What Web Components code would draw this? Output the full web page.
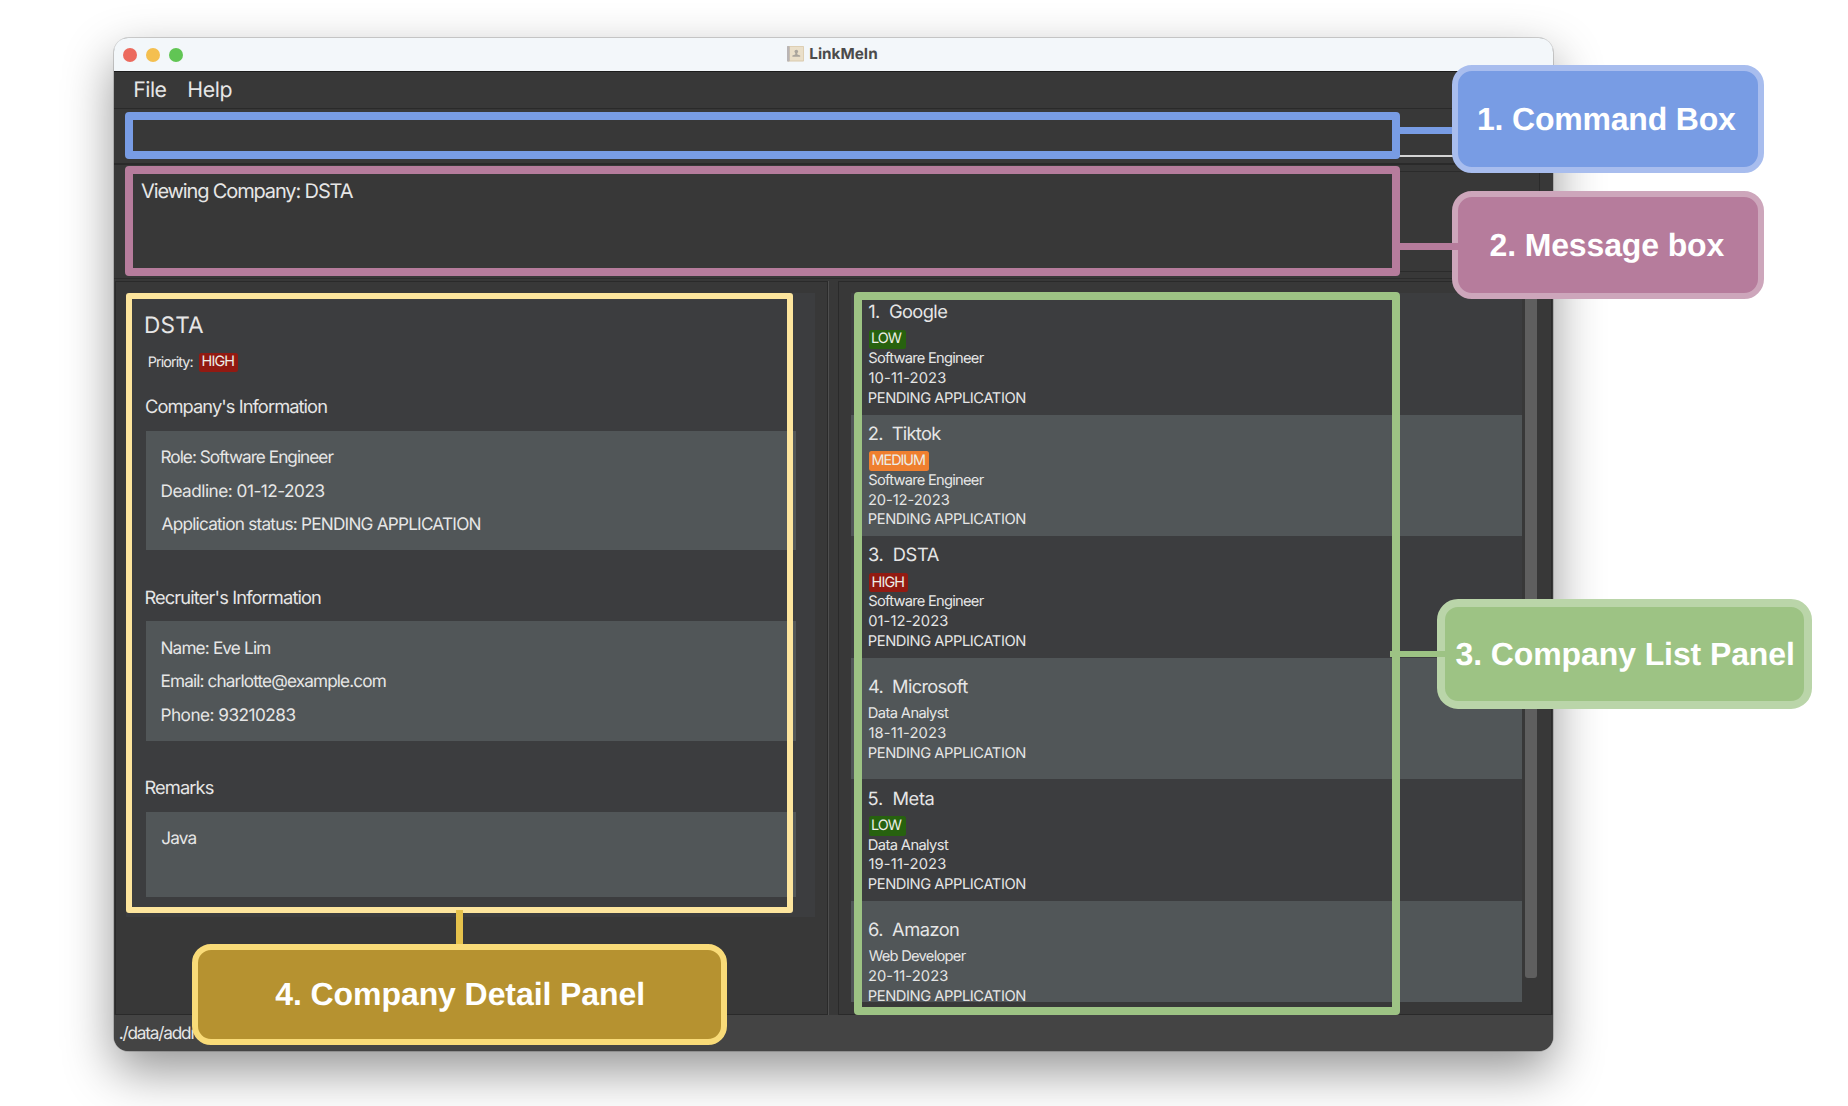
<!DOCTYPE html>
<html lang="en">
<head>
<meta charset="utf-8">
<title>LinkMeIn</title>
<style>
html,body{margin:0;background:#fff}
body{width:1848px;height:1106px;overflow:hidden;position:relative;font-family:Inter,"Liberation Sans",sans-serif;color:#e6e6e6;text-rendering:geometricPrecision}
</style>
</head>
<body>
<app-window></app-window>
<call-out style="--x:1399px;--y:127px;--w:54px;--h:6.5px;--c:#789ce4" kind="line"></call-out>
<call-out style="--x:125px;--y:112px;--w:1274.5px;--h:47px;--b:8.5px;--r:4px;--c:#789ce4" kind="frame"></call-out>
<call-out style="--x:125px;--y:166px;--w:1274.5px;--h:110px;--b:8.5px;--r:4px;--c:#b67c9c" kind="frame"></call-out>
<call-out style="--x:126px;--y:293px;--w:667px;--h:620px;--b:6.5px;--r:3px;--c:#fde59d" kind="frame"></call-out>
<call-out style="--x:853.5px;--y:292px;--w:546px;--h:723px;--b:8.5px;--r:4px;--c:#9dc384" kind="frame"></call-out>
<call-out style="--x:456px;--y:910px;--w:6.5px;--h:36px;--c:#e5c14b" kind="line"></call-out>
<call-out style="--x:1451.5px;--y:65.4px;--w:312px;--h:108px;--b:6.3px;--r:20px;--c:#a8bdee;--f:#789ce4" kind="label"><ink-text w="257" s="32" l="42">1. Command Box</ink-text></call-out>
<call-out style="--x:1451.5px;--y:191.4px;--w:312px;--h:108px;--b:6.3px;--r:20px;--c:#cda6bb;--f:#b67c9c" kind="label"><ink-text w="234" s="32" l="42">2. Message box</ink-text></call-out>
<call-out style="--x:1437px;--y:599px;--w:375px;--h:109.5px;--b:8.4px;--r:21px;--c:#bad5a9;--f:#9dc384" kind="label"><ink-text w="337" s="32" l="42">3. Company List Panel</ink-text></call-out>
<call-out style="--x:191.5px;--y:943.6px;--w:535.5px;--h:101px;--b:6.3px;--r:19px;--c:#f9db78;--f:#b69230" kind="label"><ink-text w="368" s="32" l="42">4. Company Detail Panel</ink-text></call-out>
<call-out style="--x:1399px;--y:243px;--w:59px;--h:6.5px;--c:#b67c9c" kind="line"></call-out>
<call-out style="--x:1390px;--y:651px;--w:56px;--h:6px;--c:#9dc384" kind="line"></call-out>

<script>
const define = (name, markup, setup) => {
  const tpl = document.createElement('template');
  tpl.innerHTML = markup;
  customElements.define(name, class extends HTMLElement {
    connectedCallback() {
      if (this.shadowRoot) return;
      this.attachShadow({mode: 'open'}).append(tpl.content.cloneNode(true));
      if (setup) setup(this, this.shadowRoot);
    }
  });
};

/* Single line of text whose visible ink spans w pixels:
   s = font size, l = line height. Side bearings are measured at ten times
   the size, the advance width on the laid-out text itself. */
const ctx = document.createElement('canvas').getContext('2d');
const fitText = el => {
  const s = +el.getAttribute('s'), w = +el.getAttribute('w');
  const cs = getComputedStyle(el), t = el.textContent;
  ctx.font = `${cs.fontWeight} ${s * 10}px ${cs.fontFamily}`;
  const m = ctx.measureText(t);
  const left = -m.actualBoundingBoxLeft / 10;
  const right = (m.width - m.actualBoundingBoxRight) / 10;
  const range = document.createRange();
  range.selectNodeContents(el);
  const advance = () => range.getBoundingClientRect().width;
  let gap = 0;
  for (let i = 0; i < 3; i++) {
    const inked = advance() - left - right - gap;
    gap += (w - inked) / (t.length - 1);
    el.style.letterSpacing = gap.toFixed(3) + 'px';
  }
  el.style.marginLeft = (-left).toFixed(2) + 'px';
  el.style.width = (w + left).toFixed(2) + 'px';
};
define('ink-text', `<style>
:host{display:block;white-space:pre;flex:none}
</style><slot></slot>`, el => {
  el.style.fontSize = el.getAttribute('s') + 'px';
  el.style.lineHeight = el.getAttribute('l') + 'px';
});

define('call-out', `<style>
:host{position:absolute;left:var(--x);top:var(--y);width:var(--w);height:var(--h);box-sizing:border-box}
:host([kind=line]){background:var(--c)}
:host([kind=frame]){border:var(--b) solid var(--c);border-radius:var(--r)}
:host([kind=label]){border:var(--b) solid var(--c);border-radius:var(--r);background:var(--f);display:flex;align-items:center;justify-content:center;color:#fff;font-family:"Liberation Sans",Arial,sans-serif;font-weight:700}
</style><slot></slot>`);

define('title-bar', `<style>
:host{display:flex;flex:none;background:#f3f7fa;border-bottom:1px solid #1c1c1c;box-sizing:border-box;height:34px;align-items:center;justify-content:center;position:relative;color:#4b4b4b;font-weight:700}
.lights{position:absolute;left:9px;top:9.7px;display:flex;gap:9.2px}
i{width:14px;height:14px;border-radius:50%}
svg{margin-right:6px;margin-top:-1px}
.mid{display:flex;align-items:center;margin-left:-3px;margin-top:-1px}
</style>
<div class="lights"><i style="background:#ec6a5e"></i><i style="background:#f4bf4f"></i><i style="background:#61c554"></i></div>
<div class="mid"><svg width="17" height="16" viewBox="0 0 17 16"><rect width="17" height="15.5" rx="1" fill="#d9c9aa"/><rect x="3" y=".7" width="13.3" height="13.8" fill="#eadfc9"/><rect width="2.6" height="15.5" rx=".8" fill="#b9b5b5"/><circle cx="9.3" cy="5.6" r="1.8" fill="#aaa59d"/><path d="M8.5 6h1.6l.3 2.4 2.8 1v1.4H5.4V9.4l2.8-1z" fill="#aaa59d"/></svg>
<ink-text w="66.5" s="15.3" l="20">LinkMeIn</ink-text></div>`);

define('menu-bar', `<style>
:host{display:flex;height:37px;flex:none;box-sizing:border-box;border-bottom:1px solid #2a2a2a;padding:4px 0 0 21px;gap:23px}
</style><ink-text w="31" s="21.3" l="29">File</ink-text><ink-text w="42.5" s="21.3" l="29">Help</ink-text>`);

define('command-box', `<style>
:host{display:flex;height:56px;flex:none;box-sizing:border-box;border-bottom:2px solid #2a2a2a;padding:4px 14px 6px 12px}
div{flex:1;border-bottom:2px solid #d4d4d4}
</style><div></div>`);

define('result-display', `<style>
:host{display:block;height:114px;flex:none;box-sizing:border-box;padding:6px 13px 6px 11px;border-bottom:1px solid #2c2c2c}
div{height:101px;box-sizing:border-box;border:1px solid #2b2b2b;padding:5px 0 0 15.5px}
</style><div><ink-text w="211.5" s="20" l="29">Viewing Company: DSTA</ink-text></div>`);

define('priority-tag', `<style>
:host{display:flex;height:19.6px;flex:none;align-items:center;justify-content:center;box-sizing:border-box;border-radius:2.5px;color:#eceee8}
:host([level=LOW]){background:#27620f;width:37px}
:host([level=MEDIUM]){background:#ef7f2f;width:60.5px}
:host([level=HIGH]){background:#921a12;width:39.5px}
</style>`, (el, root) => {
  const lv = el.getAttribute('level');
  const t = document.createElement('ink-text');
  t.textContent = lv;
  t.setAttribute('w', {LOW: 29.5, MEDIUM: 52, HIGH: 31}[lv]);
  t.setAttribute('s', 14.4); t.setAttribute('l', 20);
  root.append(t);
});

define('info-section', `<style>
:host{display:block;margin-bottom:35.4px}
.box{margin-top:11.7px;height:var(--bh,119.5px);width:650px;background:#515658;box-sizing:border-box;padding:10.4px 16px 0}
</style><slot name="head"></slot><div class="box"><slot></slot></div>`);

define('company-detail', `<style>
:host{display:block;width:689px;height:624px;box-sizing:border-box;background:#3c3d3f;padding:17.5px 0 0 20px}
.p{display:flex;margin:12px 0 22.7px;padding-left:3px;gap:6px}
</style>
<ink-text w="57" s="22.6" l="30">DSTA</ink-text>
<div class="p"><ink-text w="43.5" s="14.4" l="20">Priority:</ink-text><priority-tag level="HIGH"></priority-tag></div>
<info-section><ink-text slot="head" w="180.5" s="18.3" l="24">Company's Information</ink-text>
<ink-text w="171.5" s="17.2" l="33.6">Role: Software Engineer</ink-text>
<ink-text w="162" s="17.2" l="33.6">Deadline: 01-12-2023</ink-text>
<ink-text w="318" s="17.2" l="33.6">Application status: PENDING APPLICATION</ink-text></info-section>
<info-section><ink-text slot="head" w="174.5" s="18.3" l="24">Recruiter's Information</ink-text>
<ink-text w="108" s="17.2" l="33.6">Name: Eve Lim</ink-text>
<ink-text w="223.5" s="17.2" l="33.6">Email: charlotte@example.com</ink-text>
<ink-text w="133" s="17.2" l="33.6">Phone: 93210283</ink-text></info-section>
<info-section style="--bh:85px"><ink-text slot="head" w="67.5" s="18.3" l="24">Remarks</ink-text>
<ink-text w="34" s="17.2" l="33.6">Java</ink-text></info-section>`);

define('company-row', `<style>
:host{display:flex;flex-direction:column;align-items:flex-start;justify-content:center;height:121.6px;flex:none;box-sizing:border-box;padding:1.1px 0 0 18px;background:#3c3d3f}
:host(:nth-child(even)){background:#515658}
:host(:last-child){height:101px;justify-content:flex-start;padding-top:17px}
priority-tag{margin-left:-.5px}
.t{margin-bottom:5.4px}
</style>`, (el, root) => {
  const [name, nw, level, role, rw, date, dw] = el.row;
  const line = (text, w, s, l) => {
    const t = document.createElement('ink-text');
    t.textContent = text;
    t.setAttribute('w', w); t.setAttribute('s', s); t.setAttribute('l', l);
    root.append(t);
    return t;
  };
  line(name, nw, 18.3, 24).className = 't';
  if (level) {
    const p = document.createElement('priority-tag');
    p.setAttribute('level', level);
    root.append(p);
  }
  line(role, rw, 14.7, 19.7);
  line(date, dw, 14.7, 19.7);
  line('PENDING APPLICATION', 156, 14.7, 19.7);
});

define('company-list', `<style>
:host{display:flex;gap:3px;height:709.5px}
.rows{width:671px;display:flex;flex-direction:column}
.bar{width:12px;height:685px;border-radius:3px;background:#5f5f5f}
</style><div class="rows"></div><div class="bar"></div>`, (el, root) => {
  const rows = [
    ['1.  Google', 78, 'LOW', 'Software Engineer', 115, '10-11-2023', 76.5],
    ['2.  Tiktok', 72, 'MEDIUM', 'Software Engineer', 115, '20-12-2023', 80],
    ['3.  DSTA', 70, 'HIGH', 'Software Engineer', 115, '01-12-2023', 78.5],
    ['4.  Microsoft', 99, '', 'Data Analyst', 79.5, '18-11-2023', 76.5],
    ['5.  Meta', 64.5, 'LOW', 'Data Analyst', 79.5, '19-11-2023', 76.5],
    ['6.  Amazon', 89.5, '', 'Web Developer', 97, '20-11-2023', 78.5]
  ];
  for (const r of rows) {
    const n = document.createElement('company-row');
    n.row = r;
    root.querySelector('.rows').append(n);
  }
});

define('status-bar', `<style>
:host{display:block;height:36px;flex:none;background:#444;box-sizing:border-box;padding:2.5px 0 0 6px}
</style><ink-text w="76.5" s="17.2" l="31">./data/addr</ink-text>`);

define('app-window', `<style>
:host{display:flex;flex-direction:column;width:1439px;height:1013px;position:absolute;left:114px;top:38px;border-radius:15px;background:#383838;box-shadow:0 0 0 1px rgba(0,0,0,.16),0 20px 50px rgba(0,0,0,.42)}
.clip{display:flex;flex-direction:column;height:100%;border-radius:14px;overflow:hidden}
.split{flex:1;display:flex;padding:2px 1px 0}
.pane{box-sizing:border-box;border:1px solid #2a2a2a}
.l{width:713px;padding:11px 0 0 10px}
.d{width:10px;border-left:1px solid #4e4e4e;box-sizing:border-box}
.r{flex:1;padding:11px 0 0 12px}
</style>
<div class="clip">
<title-bar></title-bar><menu-bar></menu-bar><command-box></command-box><result-display></result-display>
<div class="split"><div class="pane l"><company-detail></company-detail></div><div class="d"></div><div class="pane r"><company-list></company-list></div></div>
<status-bar></status-bar>
</div>`);

/* Every element is defined now, so inherited fonts are final: fit all texts. */
const fitAll = root => {
  for (const el of root.querySelectorAll('*')) {
    if (el.localName === 'ink-text') fitText(el);
    else if (el.shadowRoot) {
      fitAll(el.shadowRoot);
    }
  }
};
fitAll(document);
</script>
</body>
</html>
